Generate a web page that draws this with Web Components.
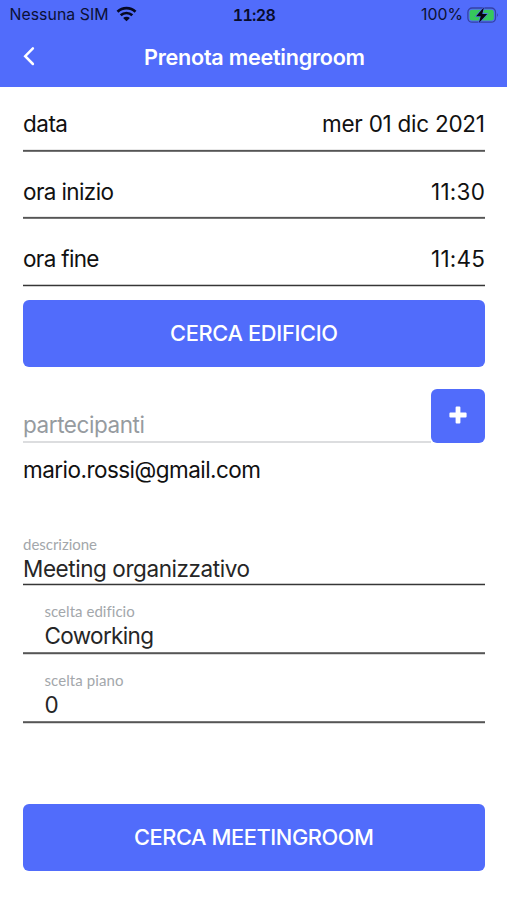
<!DOCTYPE html>
<html lang="it">
<head>
<meta charset="utf-8">
<title>Prenota meetingroom</title>
<style>
html,body{margin:0;background:#fff}
body{font-family:Inter,"Liberation Sans",sans-serif;width:507px;height:900px;overflow:hidden}
</style>
</head>
<body>
<booking-page></booking-page>
<script>
// Text run whose tracking is set so that it spans the given width.
customElements.define('fit-text', class extends HTMLElement {
  connectedCallback() {
    const root = this.attachShadow({mode: 'open'});
    root.innerHTML = `<style>:host{display:block;white-space:nowrap;line-height:1;flex:none}span{display:inline-block}</style><span></span>`;
    const span = root.querySelector('span');
    span.textContent = this.getAttribute('text');
    const want = parseFloat(this.getAttribute('span'));
    const n = span.textContent.length;
    if (want && n > 1) {
      const s = (want - span.getBoundingClientRect().width) / (n - 1);
      span.style.letterSpacing = s.toFixed(3) + 'px';
      span.style.marginRight = (-s).toFixed(3) + 'px';
    }
  }
});
const define = (name, html) => customElements.define(name, class extends HTMLElement {
  connectedCallback() {
    this.attachShadow({mode: 'open'}).innerHTML =
      html.replace(/\{(\w+)\}/g, (_, k) => this.getAttribute(k) || '');
  }
});
define('status-bar', `
<style>
:host{display:grid;grid-template-columns:1fr auto 1fr;align-items:center;height:30px;padding:0 8px 0 9.5px;box-sizing:border-box;color:#0b1035;font-size:15.8px}
.l,.r{display:flex;align-items:center}.l{gap:7px}.r{justify-content:flex-end;gap:3px}
.t{font-size:16px;font-weight:600;font-feature-settings:"tnum";color:#080c2c;margin-top:-1px}
svg{display:block}
.l svg,.r svg{margin-top:-1px}
</style>
<div class="l"><fit-text text="Nessuna SIM" span="99"></fit-text>
<svg width="21" height="16" viewBox="0 0 21 16" fill="none" stroke="#050822" stroke-width="2.7"><path d="M1.5 5.8C6.6.9 14.4.9 19.5 5.8M4.7 9.3C8 6.2 13 6.2 16.3 9.3"/><path d="M7.1 11.9C9 10.2 12 10.2 13.9 11.9L10.5 15.3Z" fill="#050822" stroke="none"/></svg></div>
<fit-text class="t" text="11:28" span="43"></fit-text>
<div class="r"><fit-text text="100%" span="42"></fit-text>
<svg width="33" height="18" viewBox="0 0 33 18"><rect x="1.9" y="2" width="27.6" height="14.2" rx="4.3" fill="none" stroke="#3442a4" stroke-width="1.3"/><rect x="3.6" y="3.7" width="24.2" height="10.8" rx="2.5" fill="#36c75c"/><path d="M31 7Q32.8 9 31 11.1Z" fill="#3442a4"/><path d="M17.9 1.2 10.1 10.2H14.7L12.9 16.9 21.2 7.9H16.3Z" fill="#06080f" stroke="#516cfb" stroke-width="1.2" paint-order="stroke"/></svg></div>`);
define('nav-bar', `
<style>
:host{display:grid;grid-template-columns:60px 1fr 60px;align-items:center;height:57px;color:#fff;font-size:21.6px;font-weight:600}
fit-text{justify-self:center;margin:-2px 0 0 2px}
svg{margin:-6px 0 0 21.5px;display:block}
</style>
<svg width="14" height="20" viewBox="0 0 14 20" fill="none" stroke="#fff" stroke-width="2.5" stroke-linecap="round" stroke-linejoin="miter"><path d="M10.9 2.4 3.2 10.2 10.9 18"/></svg>
<fit-text text="{text}" span="221"></fit-text>`);
// Hairline three pixels deep, each pixel row with its own tone.
define('rule-line', `
<style>:host{display:block;height:3px;background:linear-gradient(var(--a) 1px,var(--b) 1px 2px,var(--c) 2px)}</style>`);
define('picker-row', `
<style>
:host{display:flex;flex-direction:column;box-sizing:border-box;font-size:22.5px;color:#111}
div{flex:1;display:flex;justify-content:space-between;align-items:flex-start}
</style>
<div><fit-text text="{label}" span="{lw}"></fit-text><fit-text text="{value}" span="{vw}"></fit-text></div>
<rule-line></rule-line>`);
define('action-button', `
<style>
:host{display:flex;align-items:center;justify-content:center;height:67px;box-sizing:border-box;padding-top:1px;border-radius:6px;background:#516cfb;color:#fff;font-size:21.8px;font-weight:500}
</style>
<fit-text text="{text}" span="{span}"></fit-text>`);
define('add-field', `
<style>
:host{display:flex;height:54px;font-size:22.5px;color:#969b9f}
.f{flex:1;display:flex;align-items:flex-end;border-bottom:2px solid #dcdddf;box-sizing:border-box;padding-bottom:4px}
.b{width:54px;border-radius:6px;background:#516cfb;display:grid;place-items:center}
svg{margin-top:-2px}
</style>
<div class="f"><fit-text text="partecipanti" span="122"></fit-text></div>
<div class="b"><svg width="18" height="18" viewBox="0 0 18 18" fill="#fff"><path d="M7.6.4H10.4Q11.4.4 11.4 1.4V6.6H16.6Q17.6 6.6 17.6 7.6V10.4Q17.6 11.4 16.6 11.4H11.4V16.6Q11.4 17.6 10.4 17.6H7.6Q6.6 17.6 6.6 16.6V11.4H1.4Q.4 11.4 .4 10.4V7.6Q.4 6.6 1.4 6.6H6.6V1.4Q6.6.4 7.6.4Z"/></svg></div>`);
define('labelled-field', `
<style>
:host{display:flex;flex-direction:column;box-sizing:border-box;--in:0px}
.c{flex:1;padding-left:var(--in)}
.l{font:15px Lato,sans-serif;line-height:1;color:#a3a7ab}
.v{font-size:22.5px;color:#262626;margin-top:5.5px}
</style>
<div class="c"><fit-text class="l" text="{label}" span="{lw}"></fit-text><fit-text class="v" text="{value}" span="{vw}"></fit-text></div>
<rule-line></rule-line>`);
define('booking-page', `
<style>
:host{display:block}
header{background:#516cfb;height:87px}
main{padding:0 22px 0 23px}
.r1{height:65px;padding-top:26px}
.r2{height:67px;padding-top:29px}
.r3{height:68px;padding-top:29px}
.g{--a:#c8c8c8;--b:#363636;--c:#d0d0d0}
.h{--a:#e8e8e8;--b:#555;--c:#777}
.k{--a:#777;--b:#555;--c:#d8d8d8}
.m{font-size:22.5px;color:#111;margin-top:16px}
.d{height:49px;margin-top:56px}
.e{height:69px;padding-top:18px}
.p{height:69px;padding-top:18px}
</style>
<header><status-bar></status-bar><nav-bar text="Prenota meetingroom"></nav-bar></header>
<main>
<picker-row class="r1 h" label="data" lw="45" value="mer 01 dic 2021" vw="163"></picker-row>
<picker-row class="r2 h" label="ora inizio" lw="91" value="11:30" vw="54"></picker-row>
<picker-row class="r3 g" label="ora fine" lw="76.5" value="11:45" vw="54"></picker-row>
<action-button style="margin-top:12.5px" text="CERCA EDIFICIO" span="168"></action-button>
<add-field style="margin-top:22px"></add-field>
<fit-text class="m" text="mario.rossi@gmail.com" span="238"></fit-text>
<labelled-field class="d g" label="descrizione" lw="74" value="Meeting organizzativo" vw="227"></labelled-field>
<labelled-field class="e k" style="--in:21.5px" label="scelta edificio" lw="90" value="Coworking" vw="109.5"></labelled-field>
<labelled-field class="p k" style="--in:21.5px" label="scelta piano" lw="79" value="0"></labelled-field>
<action-button style="margin-top:80px" text="CERCA MEETINGROOM" span="240"></action-button>
</main>`);
</script>
</body>
</html>
